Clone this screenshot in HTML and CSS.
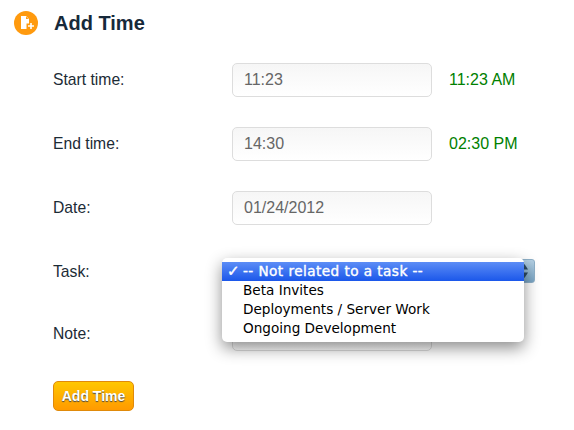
FILE: index.html
```html
<!DOCTYPE html>
<html lang="en">
<head>
  <meta charset="UTF-8" />
  <title>Add Time</title>
  <link rel="stylesheet" href="styles.css">
</head>
<body>
  <div class="heading">
    <span class="badge">
      <svg width="16" height="16" viewBox="0 0 16 16">
        <path d="M3 1h5l3 3v4.500h-2.500v5.500h-5.500z" fill="#fff"/>
        <path d="M8 1.500v2.500h2.500z" fill="#ff9a0e"/>
        <path d="M12.200 8v2.200h-2.200v1.600h2.200v2.200h1.600v-2.200h2.200v-1.600h-2.200v-2.200z" fill="#fff"/>
      </svg>
    </span>
    <h1>Add Time</h1>
  </div>

  <form class="time-form">
    <div class="row">
      <label>Start time:</label>
      <div class="field">11:23</div>
      <span class="preview">11:23 AM</span>
    </div>
    <div class="row">
      <label>End time:</label>
      <div class="field">14:30</div>
      <span class="preview">02:30 PM</span>
    </div>
    <div class="row">
      <label>Date:</label>
      <div class="field">01/24/2012</div>
    </div>
    <div class="row row-task">
      <label>Task:</label>
      <div class="select-wrap">
        <div class="select-arrows">
          <svg width="9" height="20" viewBox="0 0 9 20">
            <path d="M4.500 3l3.500 5.500h-7z" fill="#2c4a63"/>
            <path d="M4.500 17l3.500-5.500h-7z" fill="#2c4a63"/>
          </svg>
        </div>
        <ul class="menu">
          <li class="selected"><span class="check">✓</span>-- Not related to a task --</li>
          <li>Beta Invites</li>
          <li>Deployments / Server Work</li>
          <li>Ongoing Development</li>
        </ul>
      </div>
    </div>
    <div class="row row-note">
      <label>Note:</label>
      <div class="field"></div>
    </div>
    <button class="submit" type="button">Add Time</button>
  </form>
</body>
</html>
```

FILE: styles.css
```css
body {
  margin: 0;
  background: #fff;
  font-family: "Liberation Sans", Arial, sans-serif;
  font-size: 16px;
  color: #1c2b36;
  overflow: hidden;
}

.heading {
  display: flex;
  align-items: center;
  gap: 16px;
  padding: 11px 0 0 14px;
  height: 24px;
}

.badge {
  display: flex;
  align-items: center;
  justify-content: center;
  width: 24px;
  height: 24px;
  border-radius: 50%;
  background: #ff9a0e;
}

h1 {
  margin: 0;
  font-size: 20px;
  font-weight: bold;
  color: #16293a;
}

.time-form {
  padding: 28px 0 0 53px;
}

.row {
  display: flex;
  align-items: center;
  height: 34px;
  margin-bottom: 30px;
}

.row label {
  width: 179px;
  font-size: 15.700px;
}

.row-task {
  margin-bottom: 27px;
}

.row-note {
  height: 35px;
}

.field {
  box-sizing: border-box;
  width: 200px;
  height: 100%;
  padding: 0 11px;
  line-height: 31px;
  color: #666;
  background: linear-gradient(#f6f6f6, #fff);
  border: 1px solid #ddd;
  border-radius: 5px;
}

.preview {
  margin-left: 17px;
  padding-bottom: 1px;
  color: #008000;
}

.select-wrap {
  position: relative;
  width: 303px;
  height: 28px;
}

.select-arrows {
  position: absolute;
  top: 1px;
  right: 0;
  display: flex;
  align-items: center;
  justify-content: flex-end;
  box-sizing: border-box;
  width: 24px;
  height: 24px;
  padding-right: 5px;
  background: linear-gradient(#b4d0e4, #7aa6c6);
  border: 1px solid #8eb0c8;
  border-radius: 3px;
}

.menu {
  position: absolute;
  top: 0;
  left: -10px;
  width: 302px;
  margin: 0;
  padding: 4px 0;
  list-style: none;
  background: #fff;
  border-radius: 5px;
  box-shadow: 0 6px 16px rgba(0, 0, 0, 0.45);
  font-family: "DejaVu Sans", sans-serif;
  font-size: 13.600px;
  line-height: 19px;
  color: #000;
}

.menu li {
  position: relative;
  height: 19px;
  padding-left: 21px;
}

.menu .selected {
  color: #fff;
  letter-spacing: 0.45px;
  -webkit-text-stroke: 0.4px #fff;
  background: linear-gradient(#5c8df6, #1b57ea);
}

.check {
  position: absolute;
  left: 5px;
  font-size: 15px;
}

.submit {
  display: block;
  width: 81px;
  height: 30px;
  padding: 0;
  font-family: inherit;
  font-size: 14px;
  font-weight: bold;
  color: #fff;
  text-shadow: 0 1px 1px #444;
  background: linear-gradient(#ffc700, #ff9a00);
  border: 1px solid #e08a0a;
  border-radius: 5px;
}
```
